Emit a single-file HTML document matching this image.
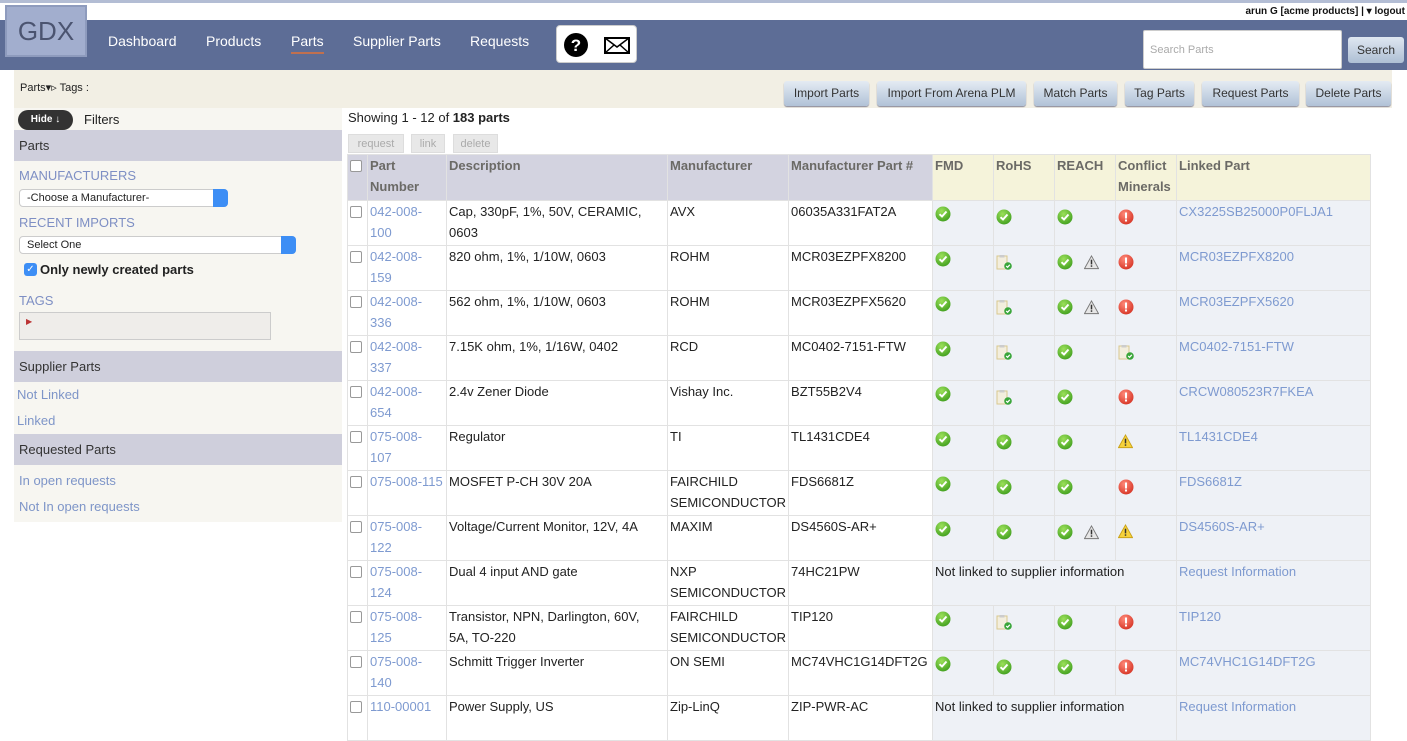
<!DOCTYPE html>
<html><head><meta charset="utf-8"><style>
*{box-sizing:border-box;margin:0;padding:0}
body{width:1407px;height:724px;overflow:hidden;background:#fff;font-family:"Liberation Sans",sans-serif;font-size:13px;color:#222;position:relative}
.abs{position:absolute}
.topline{left:0;top:0;width:1407px;height:3px;background:#b3bdd4}
.nav{left:0;top:20px;width:1407px;height:50px;background:#5d6d96}
.logo{left:5px;top:5px;width:82px;height:52px;background:#a2aece;border:2px solid #8e9bbd;color:#4b5470;font-size:26px;text-align:center;line-height:48px}
.nav a{position:absolute;top:13px;color:#fff;font-size:14px}
.user{right:2px;top:6px;font-size:10px;color:#111;font-weight:bold}
.help{left:556px;top:25px;width:81px;height:38px;background:#fff;border-radius:4px;border:1px solid #ccc}
.search{left:1143px;top:30px;width:199px;height:39px;background:#fff;border:1px solid #ccc;border-radius:2px;color:#aaa;font-size:11px;padding:13px 6px}
.sbtn{left:1348px;top:37px;width:56px;height:26px;background:linear-gradient(#dfe7f1,#aebfd4);border-radius:3px;font-size:12px;color:#333;text-align:center;line-height:26px}
.crumb{left:14px;top:70px;width:1378px;height:38px;background:#f2efe4}
.btn{position:absolute;top:81px;height:25px;background:linear-gradient(#e4ebf3,#b1c2d7);border-radius:3px;font-size:12px;color:#333;text-align:center;line-height:25px;box-shadow:0 1px 1px #889}
.side{left:14px;top:108px;width:328px;height:414px;background:#f7f6f1}
.sh{position:absolute;left:0;width:328px;background:#cfcfdc;font-size:13px;color:#333;padding-left:5px}
.lbl{position:absolute;left:5px;color:#7e8fc4;font-size:13px}
.lnk{position:absolute;color:#7e95c8;font-size:13px}
table{position:absolute;left:347px;top:154px;border-collapse:collapse;table-layout:fixed}
tr{height:45px}
td,th{border:1px solid #e2e2e2;vertical-align:top;padding:0 2px;line-height:21px;font-size:13px;text-align:left;overflow:hidden}
th{background:#d3d3e0;color:#6b6a66;font-weight:bold;height:46px}
th.y{background:#f5f3da}
td.c{background:#eef1f6}
td a,.bl{color:#7e9ad0}
.cb{display:inline-block;width:12px;height:12px;border:1px solid #999;border-radius:2px;background:#fff;margin-top:5px}
svg{vertical-align:middle}
.ic{display:inline-block;margin-top:3px}
.ic2{display:inline-block;margin-top:8px}
.mb{position:absolute;top:134px;height:19px;background:#e8e8e8;color:#aaa;font-size:11px;text-align:center;line-height:19px;border:1px solid #ddd}
</style></head><body>
<div class="abs topline"></div>
<div class="abs nav">
<a style="left:108px">Dashboard</a><a style="left:206px">Products</a><a style="left:291px;border-bottom:2px solid #c0704f;padding-bottom:3px">Parts</a><a style="left:353px">Supplier Parts</a><a style="left:470px">Requests</a>
</div>
<div class="abs logo">GDX</div>
<div class="abs user">arun G [acme products] | ▾ logout</div>
<div class="abs help"><svg class="abs" style="left:6px;top:6px" width="26" height="26"><circle cx="13" cy="13" r="12" fill="#000"/><text x="13" y="19" font-size="17" font-weight="bold" fill="#fff" text-anchor="middle" font-family="Liberation Sans">?</text></svg><svg class="abs" style="left:47px;top:11px" width="26" height="17"><rect x="1" y="1" width="24" height="15" fill="#fff" stroke="#000" stroke-width="2"/><path d="M1 1L13 10L25 1M1 16L10 8M25 16L16 8" stroke="#000" stroke-width="1.5" fill="none"/></svg></div>
<div class="abs search">Search Parts</div>
<div class="abs sbtn">Search</div>
<div class="abs crumb"><span class="abs" style="left:6px;top:11px;font-size:11px">Parts▾▹ Tags :</span></div>
<div class="btn" style="left:784px;width:85px">Import Parts</div>
<div class="btn" style="left:877px;width:149px">Import From Arena PLM</div>
<div class="btn" style="left:1034px;width:83px">Match Parts</div>
<div class="btn" style="left:1125px;width:69px">Tag Parts</div>
<div class="btn" style="left:1202px;width:97px">Request Parts</div>
<div class="btn" style="left:1306px;width:85px">Delete Parts</div>
<div class="abs side">
<div class="abs" style="left:4px;top:2px;width:55px;height:20px;background:#333;border-radius:10px;color:#fff;font-size:10px;text-align:center;line-height:20px;font-weight:bold">Hide ↓</div>
<div class="abs" style="left:70px;top:4px;font-size:13px">Filters</div>
<div class="sh" style="top:22px;height:31px;line-height:31px">Parts</div>
<div class="lbl" style="top:60px">MANUFACTURERS</div>
<div class="abs" style="left:5px;top:81px;width:209px;height:18px;background:#fff;border:1px solid #ccc;border-radius:4px;font-size:11px;padding-left:7px;line-height:16px">-Choose a Manufacturer-<span class="abs" style="right:-1px;top:-1px;width:15px;height:18px;background:#3d8ef5;border-radius:0 4px 4px 0"></span></div>
<div class="lbl" style="top:107px">RECENT IMPORTS</div>
<div class="abs" style="left:5px;top:128px;width:277px;height:18px;background:#fff;border:1px solid #ccc;border-radius:4px;font-size:11px;padding-left:7px;line-height:16px">Select One<span class="abs" style="right:-1px;top:-1px;width:15px;height:18px;background:#3d8ef5;border-radius:0 4px 4px 0"></span></div>
<div class="abs" style="left:10px;top:155px;width:13px;height:13px;background:#3d8ef5;border-radius:3px;color:#fff;font-size:10px;text-align:center;line-height:13px">✓</div>
<div class="abs" style="left:26px;top:154px;font-weight:bold;font-size:13px">Only newly created parts</div>
<div class="lbl" style="top:185px">TAGS</div>
<div class="abs" style="left:5px;top:204px;width:252px;height:28px;background:#efedea;border:1px solid #ccc"><span class="abs" style="left:6px;top:4px;color:#b33;font-size:8px">▶</span></div>
<div class="sh" style="top:243px;height:31px;line-height:31px">Supplier Parts</div>
<div class="lnk" style="left:3px;top:279px">Not Linked</div>
<div class="lnk" style="left:3px;top:305px">Linked</div>
<div class="sh" style="top:326px;height:31px;line-height:31px">Requested Parts</div>
<div class="lnk" style="left:5px;top:365px">In open requests</div>
<div class="lnk" style="left:5px;top:391px">Not In open requests</div>
</div>
<div class="abs" style="left:348px;top:110px;font-size:13px">Showing 1 - 12 of <b>183 parts</b></div>
<div class="mb" style="left:348px;width:56px">request</div>
<div class="mb" style="left:411px;width:34px">link</div>
<div class="mb" style="left:453px;width:45px">delete</div>
<svg width="0" height="0" style="position:absolute"><defs>
<radialGradient id="gg" cx=".4" cy=".3" r=".8"><stop offset="0" stop-color="#9be05a"/><stop offset="1" stop-color="#3a9a1a"/></radialGradient>
<radialGradient id="rg" cx=".4" cy=".3" r=".8"><stop offset="0" stop-color="#ff8a7a"/><stop offset="1" stop-color="#d22d1e"/></radialGradient>
<symbol id="g" viewBox="0 0 16 16"><circle cx="8" cy="8" r="7.5" fill="url(#gg)"/><path d="M4.5 8.2L7 10.5L11.5 5.5" stroke="#fff" stroke-width="2" fill="none"/></symbol>
<symbol id="r" viewBox="0 0 16 16"><circle cx="8" cy="8" r="7.5" fill="url(#rg)"/><rect x="7" y="3.5" width="2" height="6" fill="#fff"/><rect x="7" y="10.5" width="2" height="2" fill="#fff"/></symbol>
<symbol id="y" viewBox="0 0 16 16"><path d="M8 1L15.5 14.5H.5Z" fill="#f7d23a" stroke="#c9a21a"/><rect x="7.2" y="5" width="1.6" height="5" fill="#333"/><rect x="7.2" y="11" width="1.6" height="1.6" fill="#333"/></symbol>
<symbol id="w" viewBox="0 0 16 16"><path d="M8 1L15.5 14.5H.5Z" fill="#e6e6e6" stroke="#777"/><rect x="7.2" y="5" width="1.6" height="5" fill="#333"/><rect x="7.2" y="11" width="1.6" height="1.6" fill="#333"/></symbol>
<symbol id="p" viewBox="0 0 16 16"><rect x="1" y="2" width="10" height="13" fill="#f3eedd" stroke="#d8c88e"/><rect x="3.5" y="1" width="5" height="2.5" fill="#ccc"/><circle cx="12" cy="12" r="3.8" fill="#3aa63a"/><path d="M10.2 12L11.6 13.3L13.8 10.8" stroke="#fff" stroke-width="1.2" fill="none"/></symbol>
</defs></svg>
<table>
<colgroup><col style="width:20px"><col style="width:79px"><col style="width:221px"><col style="width:121px"><col style="width:144px"><col style="width:61px"><col style="width:61px"><col style="width:61px"><col style="width:61px"><col style="width:194px"></colgroup>
<tr style="height:46px"><th><span class="cb"></span></th><th>Part Number</th><th>Description</th><th>Manufacturer</th><th>Manufacturer Part #</th><th class="y">FMD</th><th class="y">RoHS</th><th class="y">REACH</th><th class="y">Conflict Minerals</th><th class="y">Linked Part</th></tr>
<tr><td><span class="cb"></span></td><td><a>042-008-<br>100</a></td><td>Cap, 330pF, 1%, 50V, CERAMIC,<br>0603</td><td>AVX</td><td>06035A331FAT2A</td><td class="c"><svg class="ic" width="16" height="16"><use href="#g"/></svg></td><td class="c"><svg class="ic2" width="16" height="16"><use href="#g"/></svg></td><td class="c"><svg class="ic2" width="16" height="16"><use href="#g"/></svg></td><td class="c"><svg class="ic2" width="16" height="16"><use href="#r"/></svg></td><td class="c"><a>CX3225SB25000P0FLJA1</a></td></tr>
<tr><td><span class="cb"></span></td><td><a>042-008-<br>159</a></td><td>820 ohm, 1%, 1/10W, 0603</td><td>ROHM</td><td>MCR03EZPFX8200</td><td class="c"><svg class="ic" width="16" height="16"><use href="#g"/></svg></td><td class="c"><svg class="ic2" width="16" height="16"><use href="#p"/></svg></td><td class="c"><svg class="ic2" width="16" height="16"><use href="#g"/></svg> &nbsp; <svg class="ic2" width="15" height="15"><use href="#w"/></svg></td><td class="c"><svg class="ic2" width="16" height="16"><use href="#r"/></svg></td><td class="c"><a>MCR03EZPFX8200</a></td></tr>
<tr><td><span class="cb"></span></td><td><a>042-008-<br>336</a></td><td>562 ohm, 1%, 1/10W, 0603</td><td>ROHM</td><td>MCR03EZPFX5620</td><td class="c"><svg class="ic" width="16" height="16"><use href="#g"/></svg></td><td class="c"><svg class="ic2" width="16" height="16"><use href="#p"/></svg></td><td class="c"><svg class="ic2" width="16" height="16"><use href="#g"/></svg> &nbsp; <svg class="ic2" width="15" height="15"><use href="#w"/></svg></td><td class="c"><svg class="ic2" width="16" height="16"><use href="#r"/></svg></td><td class="c"><a>MCR03EZPFX5620</a></td></tr>
<tr><td><span class="cb"></span></td><td><a>042-008-<br>337</a></td><td>7.15K ohm, 1%, 1/16W, 0402</td><td>RCD</td><td>MC0402-7151-FTW</td><td class="c"><svg class="ic" width="16" height="16"><use href="#g"/></svg></td><td class="c"><svg class="ic2" width="16" height="16"><use href="#p"/></svg></td><td class="c"><svg class="ic2" width="16" height="16"><use href="#g"/></svg></td><td class="c"><svg class="ic2" width="16" height="16"><use href="#p"/></svg></td><td class="c"><a>MC0402-7151-FTW</a></td></tr>
<tr><td><span class="cb"></span></td><td><a>042-008-<br>654</a></td><td>2.4v Zener Diode</td><td>Vishay Inc.</td><td>BZT55B2V4</td><td class="c"><svg class="ic" width="16" height="16"><use href="#g"/></svg></td><td class="c"><svg class="ic2" width="16" height="16"><use href="#p"/></svg></td><td class="c"><svg class="ic2" width="16" height="16"><use href="#g"/></svg></td><td class="c"><svg class="ic2" width="16" height="16"><use href="#r"/></svg></td><td class="c"><a>CRCW080523R7FKEA</a></td></tr>
<tr><td><span class="cb"></span></td><td><a>075-008-<br>107</a></td><td>Regulator</td><td>TI</td><td>TL1431CDE4</td><td class="c"><svg class="ic" width="16" height="16"><use href="#g"/></svg></td><td class="c"><svg class="ic2" width="16" height="16"><use href="#g"/></svg></td><td class="c"><svg class="ic2" width="16" height="16"><use href="#g"/></svg></td><td class="c"><svg class="ic2" width="15" height="15"><use href="#y"/></svg></td><td class="c"><a>TL1431CDE4</a></td></tr>
<tr><td><span class="cb"></span></td><td><a>075-008-115</a></td><td>MOSFET P-CH 30V 20A</td><td>FAIRCHILD<br>SEMICONDUCTOR</td><td>FDS6681Z</td><td class="c"><svg class="ic" width="16" height="16"><use href="#g"/></svg></td><td class="c"><svg class="ic2" width="16" height="16"><use href="#g"/></svg></td><td class="c"><svg class="ic2" width="16" height="16"><use href="#g"/></svg></td><td class="c"><svg class="ic2" width="16" height="16"><use href="#r"/></svg></td><td class="c"><a>FDS6681Z</a></td></tr>
<tr><td><span class="cb"></span></td><td><a>075-008-<br>122</a></td><td>Voltage/Current Monitor, 12V, 4A</td><td>MAXIM</td><td>DS4560S-AR+</td><td class="c"><svg class="ic" width="16" height="16"><use href="#g"/></svg></td><td class="c"><svg class="ic2" width="16" height="16"><use href="#g"/></svg></td><td class="c"><svg class="ic2" width="16" height="16"><use href="#g"/></svg> &nbsp; <svg class="ic2" width="15" height="15"><use href="#w"/></svg></td><td class="c"><svg class="ic2" width="15" height="15"><use href="#y"/></svg></td><td class="c"><a>DS4560S-AR+</a></td></tr>
<tr><td><span class="cb"></span></td><td><a>075-008-<br>124</a></td><td>Dual 4 input AND gate</td><td>NXP<br>SEMICONDUCTOR</td><td>74HC21PW</td><td class="c" colspan="4" style="white-space:nowrap">Not linked to supplier information</td><td class="c"><a>Request Information</a></td></tr>
<tr><td><span class="cb"></span></td><td><a>075-008-<br>125</a></td><td>Transistor, NPN, Darlington, 60V,<br>5A, TO-220</td><td>FAIRCHILD<br>SEMICONDUCTOR</td><td>TIP120</td><td class="c"><svg class="ic" width="16" height="16"><use href="#g"/></svg></td><td class="c"><svg class="ic2" width="16" height="16"><use href="#p"/></svg></td><td class="c"><svg class="ic2" width="16" height="16"><use href="#g"/></svg></td><td class="c"><svg class="ic2" width="16" height="16"><use href="#r"/></svg></td><td class="c"><a>TIP120</a></td></tr>
<tr><td><span class="cb"></span></td><td><a>075-008-<br>140</a></td><td>Schmitt Trigger Inverter</td><td>ON SEMI</td><td style="white-space:nowrap">MC74VHC1G14DFT2G</td><td class="c"><svg class="ic" width="16" height="16"><use href="#g"/></svg></td><td class="c"><svg class="ic2" width="16" height="16"><use href="#g"/></svg></td><td class="c"><svg class="ic2" width="16" height="16"><use href="#g"/></svg></td><td class="c"><svg class="ic2" width="16" height="16"><use href="#r"/></svg></td><td class="c"><a>MC74VHC1G14DFT2G</a></td></tr>
<tr><td><span class="cb"></span></td><td><a>110-00001</a></td><td>Power Supply, US</td><td>Zip-LinQ</td><td>ZIP-PWR-AC</td><td class="c" colspan="4" style="white-space:nowrap">Not linked to supplier information</td><td class="c"><a>Request Information</a></td></tr>
</table>
</body></html>
